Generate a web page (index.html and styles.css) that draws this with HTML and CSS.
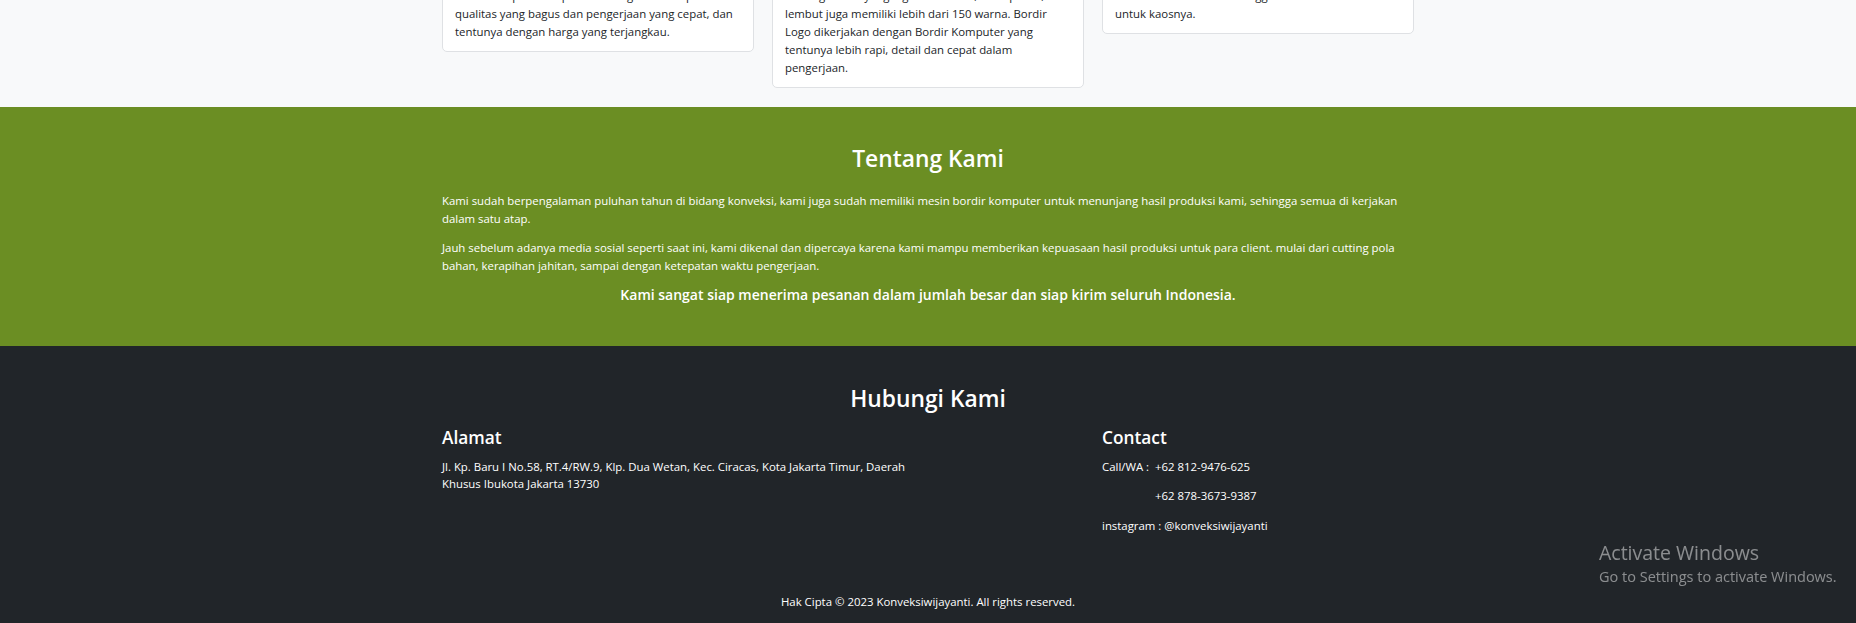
FILE: index.html
```html
<!DOCTYPE html>
<html lang="id">
<head>
<meta charset="utf-8">
<title>Konveksi Wijayanti</title>
<link rel="stylesheet" href="styles.css">
</head>
<body>
<section class="services">
  <div class="container cards">
    <div class="card">
      <h5 class="card-title">Harga Terjangkau</h5>
      <p class="card-text">Kami memproduksi pakaian dengan bahan pilihan<br>qualitas yang bagus dan pengerjaan yang cepat, dan<br>tentunya dengan harga yang terjangkau.</p>
    </div>
    <div class="card">
      <h5 class="card-title">Bordir Komputer</h5>
      <p class="card-text">Benang bordir yang digunakan kuat, tidak pudar,<br>lembut juga memiliki lebih dari 150 warna. Bordir<br>Logo dikerjakan dengan Bordir Komputer yang<br>tentunya lebih rapi, detail dan cepat dalam<br>pengerjaan.</p>
    </div>
    <div class="card">
      <h5 class="card-title">Desain Bebas</h5>
      <p class="card-text">Semua ukuran tersedia tinggal kirim desain<br>untuk kaosnya.</p>
    </div>
  </div>
</section>

<section class="about">
  <div class="container">
    <h2 class="section-title">Tentang Kami</h2>
    <p>Kami sudah berpengalaman puluhan tahun di bidang konveksi, kami juga sudah memiliki mesin bordir komputer untuk menunjang hasil produksi kami, sehingga semua di kerjakan dalam satu atap.</p>
    <p>Jauh sebelum adanya media sosial seperti saat ini, kami dikenal dan dipercaya karena kami mampu memberikan kepuasaan hasil produksi untuk para client. mulai dari cutting pola bahan, kerapihan jahitan, sampai dengan ketepatan waktu pengerjaan.</p>
    <h6 class="lead">Kami sangat siap menerima pesanan dalam jumlah besar dan siap kirim seluruh Indonesia.</h6>
  </div>
</section>

<footer class="contact">
  <div class="container">
    <h2 class="section-title contact-title">Hubungi Kami</h2>
    <div class="contact-grid">
      <div class="col-address">
        <h5 class="col-title">Alamat</h5>
        <p class="address">Jl. Kp. Baru I No.58, RT.4/RW.9, Klp. Dua Wetan, Kec. Ciracas, Kota Jakarta Timur, Daerah Khusus Ibukota Jakarta 13730</p>
      </div>
      <div class="col-contact">
        <h5 class="col-title">Contact</h5>
        <p><span class="label">Call/WA :</span>+62 812-9476-625</p>
        <p class="indent">+62 878-3673-9387</p>
        <p class="last">instagram : @konveksiwijayanti</p>
      </div>
    </div>
    <p class="copyright">Hak Cipta © 2023 Konveksiwijayanti. All rights reserved.</p>
  </div>
</footer>

<div class="activate">
  <div class="activate-title">Activate Windows</div>
  <div class="activate-sub">Go to Settings to activate Windows.</div>
</div>
</body>
</html>
```
FILE: styles.css
```css
* { box-sizing: border-box; }

html, body {
  margin: 0;
  padding: 0;
}

body {
  font-family: "Open Sans", "Noto Sans", sans-serif;
  font-size: 11.4px;
  line-height: 17.6px;
  color: #212529;
  background: #f8f9fa;
}

.container {
  width: 972px;
  margin: 0 auto;
}

/* services */
.services {
  background: #f8f9fa;
  padding: 0 0 19px;
}

.cards {
  display: grid;
  grid-template-columns: repeat(3, 312px);
  gap: 18px;
  align-items: start;
  margin-top: -52px;
}

.card {
  background: #fff;
  border: 1px solid #dfe1e4;
  border-radius: 5px;
  padding: 12px 12px 10px;
  overflow: hidden;
}

.card-title {
  margin: 0 0 8px;
  font-size: 15px;
  line-height: 18px;
  font-weight: 600;
}

.card-text {
  margin: 0;
  line-height: 18px;
  white-space: nowrap;
}

/* about */
.about {
  background: #6b8e23;
  color: #fff;
  padding: 38px 0 43px;
}

.section-title {
  margin: 0 0 19px;
  font-size: 22.8px;
  line-height: 28.2px;
  font-weight: 600;
  text-align: center;
}

.about p {
  margin: 0 0 12px;
}

.lead {
  margin: 0;
  font-size: 14px;
  line-height: 16.8px;
  font-weight: 600;
  text-align: center;
}

/* contact */
.contact {
  background: #212529;
  color: #fff;
  padding: 38.4px 0 12.6px;
}

.contact-title {
  margin-bottom: 15px;
}

.contact-grid {
  display: grid;
  grid-template-columns: 642px 312px;
  column-gap: 18px;
}

.col-title {
  margin: 0 0 9px;
  font-size: 17.3px;
  line-height: 20.76px;
  font-weight: 600;
}

.address {
  margin: 0;
  max-width: 485px;
}

.col-contact p {
  margin: 0 0 12px;
}

.col-contact p.last {
  margin-bottom: 0;
}

.label {
  display: inline-block;
  width: 53px;
}

.indent {
  padding-left: 53px;
}

.copyright {
  margin: 58.2px 0 0;
  text-align: center;
}

/* windows watermark overlay */
.activate {
  position: fixed;
  left: 1599px;
  top: 541.4px;
  color: rgba(255, 255, 255, 0.48);
  white-space: nowrap;
}

.activate-title {
  font-size: 19.5px;
  line-height: 24px;
}

.activate-sub {
  margin-top: 2px;
  font-size: 14.5px;
  line-height: 20px;
}
```
